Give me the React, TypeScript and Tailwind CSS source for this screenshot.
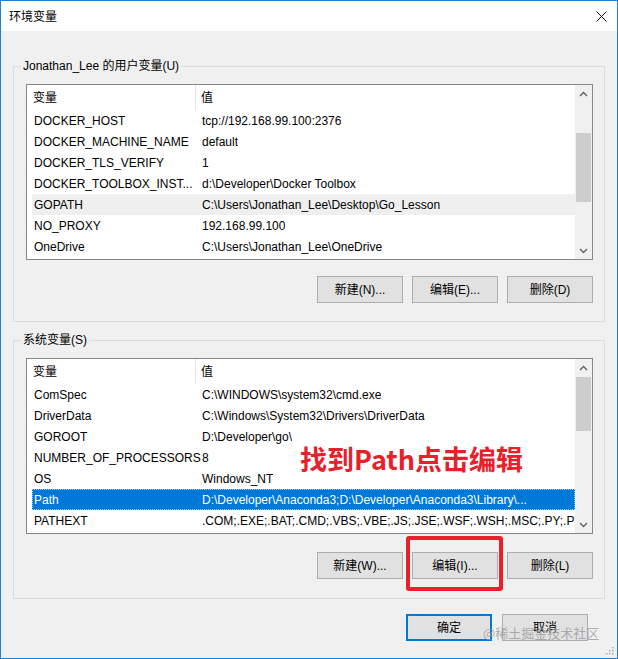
import React from 'react';

type Row = { name: string; value: string; state?: 'hover' | 'selected' };

const userVars: Row[] = [
  { name: 'DOCKER_HOST', value: 'tcp://192.168.99.100:2376' },
  { name: 'DOCKER_MACHINE_NAME', value: 'default' },
  { name: 'DOCKER_TLS_VERIFY', value: '1' },
  { name: 'DOCKER_TOOLBOX_INST...', value: 'd:\\Developer\\Docker Toolbox' },
  { name: 'GOPATH', value: 'C:\\Users\\Jonathan_Lee\\Desktop\\Go_Lesson', state: 'hover' },
  { name: 'NO_PROXY', value: '192.168.99.100' },
  { name: 'OneDrive', value: 'C:\\Users\\Jonathan_Lee\\OneDrive' },
];

const sysVars: Row[] = [
  { name: 'ComSpec', value: 'C:\\WINDOWS\\system32\\cmd.exe' },
  { name: 'DriverData', value: 'C:\\Windows\\System32\\Drivers\\DriverData' },
  { name: 'GOROOT', value: 'D:\\Developer\\go\\' },
  { name: 'NUMBER_OF_PROCESSORS', value: '8' },
  { name: 'OS', value: 'Windows_NT' },
  { name: 'Path', value: 'D:\\Developer\\Anaconda3;D:\\Developer\\Anaconda3\\Library\\...', state: 'selected' },
  { name: 'PATHEXT', value: '.COM;.EXE;.BAT;.CMD;.VBS;.VBE;.JS;.JSE;.WSF;.WSH;.MSC;.PY;.PYW' },
];

function Chevron({ up }: { up?: boolean }) {
  return (
    <svg width="9" height="6" viewBox="0 0 9 6">
      <polyline
        points={up ? '1,5 4.5,1.5 8,5' : '1,1 4.5,4.5 8,1'}
        fill="none"
        stroke="#606060"
        strokeWidth="1.4"
      />
    </svg>
  );
}

function Scrollbar({ thumbTop, thumbHeight }: { thumbTop: number; thumbHeight: number }) {
  return (
    <div className="w-[17px] bg-[#f0f0f0] flex flex-col">
      <div className="h-[17px] flex items-center justify-center">
        <Chevron up />
      </div>
      <div className="flex-1 px-[1px]">
        <div className="bg-[#cdcdcd]" style={{ marginTop: thumbTop, height: thumbHeight }} />
      </div>
      <div className="h-[17px] flex items-center justify-center">
        <Chevron />
      </div>
    </div>
  );
}

function VarList({ rows, thumbTop, thumbHeight, children }: { rows: Row[]; thumbTop: number; thumbHeight: number; children?: React.ReactNode }) {
  return (
    <div className="relative h-[176px] border border-[#828790] bg-white flex">
      <div className="flex-1 min-w-0 overflow-hidden">
        <div className="h-[25px] flex items-center">
          <div className="w-[169px] h-full pl-[6px] flex items-center border-r border-[#e5e5e5]">变量</div>
          <div className="pl-[5px]">值</div>
        </div>
        {rows.map((row) => (
          <div
            key={row.name}
            className={`h-[21px] ml-[5px] pl-[2px] flex items-center whitespace-nowrap ${
              row.state === 'selected'
                ? 'bg-[#0078d7] text-white outline outline-1 outline-dotted outline-[#9fc9ee] -outline-offset-1'
                : row.state === 'hover'
                ? 'bg-[#efefef]'
                : ''
            }`}
          >
            <div className="w-[164px] shrink-0">{row.name}</div>
            <div className="pl-[4px] overflow-hidden">{row.value}</div>
          </div>
        ))}
      </div>
      <Scrollbar thumbTop={thumbTop} thumbHeight={thumbHeight} />
      {children}
    </div>
  );
}

function Btn({ label, primary }: { label: string; primary?: boolean }) {
  return (
    <button
      className={`h-[27px] w-[86px] bg-[#e1e1e1] flex items-center justify-center ${
        primary ? 'border-2 border-[#0078d7]' : 'border border-[#adadad]'
      }`}
    >
      {label}
    </button>
  );
}

export default function App() {
  return (
    <div className="relative w-[618px] h-[659px] border border-[#1883d7] bg-[#f0f0f0] flex flex-col text-[12px] text-black font-['Liberation_Sans','Noto_Sans_CJK_SC',sans-serif]">
      <div className="h-[30px] bg-white flex items-center justify-between pl-[8px] pr-[10px]">
        <span className="font-['Noto_Sans_CJK_SC',sans-serif]">环境变量</span>
        <svg width="11" height="11" viewBox="0 0 11 11">
          <path d="M0.5 0.5 L10.5 10.5 M10.5 0.5 L0.5 10.5" stroke="#111" strokeWidth="1" />
        </svg>
      </div>

      <div className="px-3">
        <fieldset className="min-w-0 mt-[27px] border border-[#dcdcdc] pl-[12px] pr-[11px] pt-[10px] pb-[18px]">
          <legend className="ml-[-5px] px-[2px] leading-[16px]">Jonathan_Lee 的用户变量(U)</legend>
          <VarList rows={userVars} thumbTop={31} thumbHeight={69} />
          <div className="mt-[16px] flex justify-end gap-[9px]">
            <Btn label="新建(N)..." />
            <Btn label="编辑(E)..." />
            <Btn label="删除(D)" />
          </div>
        </fieldset>

        <fieldset className="min-w-0 mt-[10px] border border-[#dcdcdc] pl-[12px] pr-[11px] pt-[10px] pb-[19px]">
          <legend className="ml-[-5px] px-[2px] leading-[16px]">系统变量(S)</legend>
          <VarList rows={sysVars} thumbTop={1} thumbHeight={54}>
            <span className="absolute left-[273px] top-[84px] text-[27px] leading-[32px] font-bold text-[#e8202a] font-['Noto_Sans_CJK_SC',sans-serif]">
              找到Path点击编辑
            </span>
          </VarList>
          <div className="mt-[18px] flex justify-end gap-[9px]">
            <Btn label="新建(W)..." />
            <div className="relative">
              <Btn label="编辑(I)..." />
              <div className="absolute -left-[6px] -right-[5px] -top-[16px] -bottom-[12px] border-4 border-[#e8202a] rounded-[3px]" />
            </div>
            <Btn label="删除(L)" />
          </div>
        </fieldset>

        <div className="mt-[15px] flex justify-end gap-[10px] pr-[17px]">
          <Btn label="确定" primary />
          <Btn label="取消" />
        </div>
      </div>

      <span className="absolute left-[482px] top-[623px] text-[13px] leading-[18px] text-[#9a9a9a]/80 font-['Noto_Sans_CJK_SC',sans-serif]">
        @稀土掘金技术社区
      </span>
      <svg className="absolute right-[3px] bottom-[3px]" width="10" height="10" viewBox="0 0 10 10">
        <rect x="8" y="2" width="1.5" height="1.5" fill="#aaa" />
        <rect x="5" y="5" width="1.5" height="1.5" fill="#aaa" />
        <rect x="8" y="5" width="1.5" height="1.5" fill="#aaa" />
        <rect x="2" y="8" width="1.5" height="1.5" fill="#aaa" />
        <rect x="5" y="8" width="1.5" height="1.5" fill="#aaa" />
        <rect x="8" y="8" width="1.5" height="1.5" fill="#aaa" />
      </svg>
    </div>
  );
}
